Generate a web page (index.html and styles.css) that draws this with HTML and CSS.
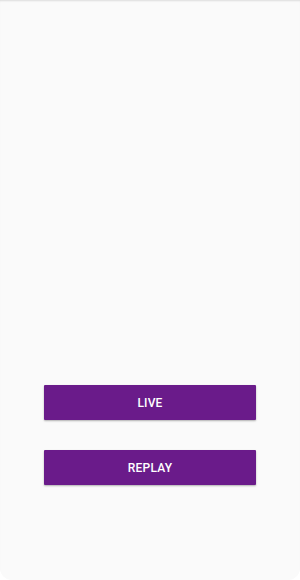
FILE: index.html
```html
<!DOCTYPE html>
<html lang="en">
<head>
    <meta charset="UTF-8">
    <meta name="viewport" content="width=device-width, initial-scale=1.0">
    <title>Mode</title>
    <link rel="stylesheet" href="styles.css">
</head>
<body>
<div class="screen">
    <div class="actions">
        <button class="btn">LIVE</button>
        <button class="btn">REPLAY</button>
    </div>
</div>
</body>
</html>
```

FILE: styles.css
```css
body {
    margin: 0;
    background-color: #fff;
    font-family: Roboto, "Noto Sans", sans-serif;
}

.screen {
    height: 580px;
    background-color: #fafafa;
    border-radius: 0 0 12px 12px;
    box-shadow: inset 0 2px 2px -1px rgba(0, 0, 0, 0.12);
    display: flex;
    flex-direction: column;
    align-items: center;
}

.actions {
    margin-top: 385px;
    display: flex;
    flex-direction: column;
    gap: 30px;
}

.btn {
    width: 212px;
    height: 35px;
    border: none;
    border-radius: 1px;
    background-color: #6a1b8a;
    color: #fff;
    font-family: Roboto, sans-serif;
    font-weight: 500;
    font-size: 12px;
    letter-spacing: 0.2px;
    box-shadow: 0 1px 2px rgba(0, 0, 0, 0.3);
    cursor: pointer;
}
```
